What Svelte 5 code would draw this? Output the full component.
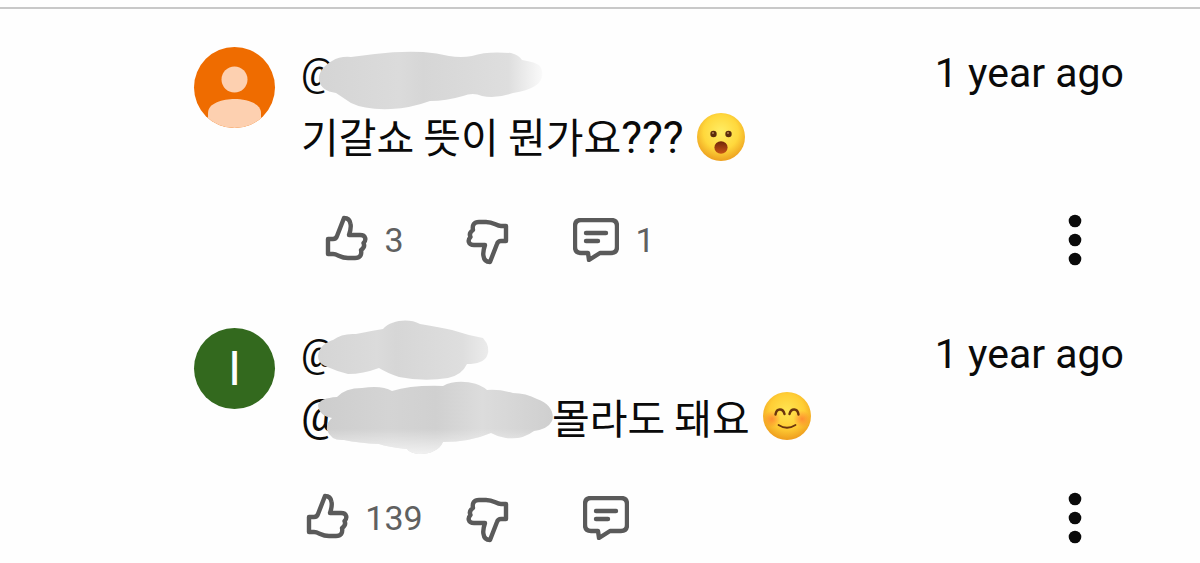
<script>
	let comments = [
		{
			avatar: 'person',
			time: '1 year ago',
			text: '기갈쇼 뜻이 뭔가요',
			marks: '???',
			emoji: 'wow',
			likes: '3',
			replies: '1',
			blot: 'M18 33C17 25 24 18 31 14Q39 9 50 10L74 7Q98 4 122 5Q136 6 148 9Q160 11 171 9C182 5 196 5 210 6Q218 8 221 13Q235 15 239 19C243 26 242 34 234 39Q226 44 212 46Q195 52 181 49Q172 45 162 49Q145 54 129 54Q110 61 90 62Q64 63 50 56Q41 50 35 46Q20 44 18 33Z'
		},
		{
			avatar: 'letter',
			time: '1 year ago',
			mention: true,
			text: '몰라도 돼요',
			emoji: 'smile',
			likes: '139',
			replies: '',
			blot: 'M17 28C18 18 26 14 32 12Q41 5 55 6Q75 2 82 1C90-8 108-10 119-4Q137-1 151 2Q166 7 182 10Q190 19 186 28Q182 36 166 36Q161 47 147 50Q123 54 98 49Q86 45 78 40Q62 46 47 46Q35 43 24 38Q17 35 17 28Z'
		}
	];
</script>

<section class="comments" aria-label="Comments">
	{#each comments as comment, i}
		<article class="comment">
			<a class="avatar {comment.avatar}" href="#channel" aria-label="Channel">
				{#if comment.avatar === 'person'}
					<svg viewBox="0 0 81 81" aria-hidden="true">
						<circle cx="40.5" cy="32.5" r="13" />
						<path d="M14 72V66C14 56 29 52 40.5 52S67 56 67 66V72Q56 81 40.5 81T14 72Z" />
					</svg>
				{:else}
					I
				{/if}
			</a>

			<div class="body">
				<header>
					<a class="handle" href="#channel">
						@
						<svg class="blot" viewBox="0 0 260 80" aria-hidden="true">
							<defs>
								<linearGradient id="fade-{i}" gradientUnits="userSpaceOnUse" x1="0" x2={i ? 190 : 244}>
									<stop offset="0" stop-color="#d3d3d3" />
									<stop offset="0.4" stop-color="#dbdbdb" />
									<stop offset="0.5" stop-color="#d6d6d6" />
									<stop offset="0.85" stop-color="#dedede" />
									<stop offset="1" stop-color={i ? '#ededed' : '#fcfcfc'} />
								</linearGradient>
							</defs>
							<path d={comment.blot} fill="url(#fade-{i})" />
						</svg>
					</a>
					<time>{comment.time}</time>
				</header>

				<p>
					{#if comment.mention}
						<a class="mention latin" href="#mention">
							@
							<svg class="blot" viewBox="0 0 260 80" aria-hidden="true">
								<defs>
									<linearGradient id="mention-fade" x1="0" x2="1">
										<stop offset="0" stop-color="#cdcdcd" />
										<stop offset="0.3" stop-color="#d4d4d4" />
										<stop offset="0.5" stop-color="#d0d0d0" />
										<stop offset="0.7" stop-color="#dcdcdc" />
										<stop offset="1" stop-color="#cfcfcf" />
									</linearGradient>
									<linearGradient id="mention-drip" x1="0" x2="0" y1="0" y2="1">
										<stop offset="0.65" stop-color="#fff" stop-opacity="0" />
										<stop offset="1" stop-color="#fff" stop-opacity="0.7" />
									</linearGradient>
								</defs>
								{#each ['url(#mention-fade)', 'url(#mention-drip)'] as fill}
									<path
										{fill}
										d="M17 18Q19 11 36 10Q44 1 61 1Q81-2 91 4Q110-2 142-1C154-8 176-6 186 3Q198 2 212 6Q225 6 236 12C249 16 254 27 251 34Q247 42 233 44Q221 53 205 51Q197 50 190 46Q169 55 142 55C136 69 112 70 106 62Q87 60 78 57Q58 56 43 53Q30 54 26 43Q25 36 31 31Q18 29 17 18Z"
									/>
								{/each}
							</svg>
						</a>
					{/if}<span>{comment.text}{#if comment.marks}<span class="latin">{comment.marks}</span>{/if}</span>
					{#if comment.emoji === 'wow'}
						<svg class="emoji" viewBox="0 0 48 48" role="img" aria-label="Surprised">
							<defs>
								<radialGradient id="wow-face" cx="0.5" cy="0.4" r="0.6">
									<stop offset="0" stop-color="#ffee66" />
									<stop offset="0.6" stop-color="#ffd83c" />
									<stop offset="1" stop-color="#eda01f" />
								</radialGradient>
								<linearGradient id="wow-mouth" x1="0" x2="0" y1="0" y2="1">
									<stop offset="0" stop-color="#70260a" />
									<stop offset="1" stop-color="#c85415" />
								</linearGradient>
							</defs>
							<circle cx="24" cy="24" r="24" fill="url(#wow-face)" />
							<circle cx="16.5" cy="21" r="3.2" fill="#5a2c0c" />
							<circle cx="31.5" cy="21" r="3.2" fill="#5a2c0c" />
							<circle cx="16" cy="20" r="1" fill="#b58250" />
							<circle cx="31" cy="20" r="1" fill="#b58250" />
							<ellipse cx="24" cy="34.5" rx="6.6" ry="6.2" fill="url(#wow-mouth)" />
						</svg>
					{:else}
						<svg class="emoji" viewBox="0 0 48 48" role="img" aria-label="Smiling">
							<defs>
								<radialGradient id="smile-face" cx="0.5" cy="0.4" r="0.6">
									<stop offset="0" stop-color="#ffe552" />
									<stop offset="0.6" stop-color="#ffce35" />
									<stop offset="1" stop-color="#ee9c1d" />
								</radialGradient>
								<radialGradient id="blush">
									<stop offset="0" stop-color="#ff7330" stop-opacity="0.7" />
									<stop offset="1" stop-color="#ff7330" stop-opacity="0" />
								</radialGradient>
							</defs>
							<circle cx="24" cy="24" r="24" fill="url(#smile-face)" />
							<circle cx="9" cy="27" r="8.5" fill="url(#blush)" />
							<circle cx="39" cy="27" r="8.5" fill="url(#blush)" />
							<g fill="none" stroke="#6b350e" stroke-linecap="round" stroke-width="2.4">
								<path d="M12.5 22.5C13.5 16 20 16 21.5 22" />
								<path d="M26.5 22C28 16 34.5 16 35.5 22.5" />
								<path d="M15.5 33Q24 38.5 32.5 33" stroke-width="1.8" />
							</g>
						</svg>
					{/if}
				</p>

				<div class="actions">
					<button aria-label="Like">
						{@render thumb('')}
						<span class="count">{comment.likes}</span>
					</button>
					<button aria-label="Dislike">{@render thumb('down')}</button>
					<button aria-label="Replies">
						<svg class="icon reply" viewBox="0 0 46 44" aria-hidden="true">
							<path d="M8 2H38Q44 2 44 8V29Q44 35 38 35H27L16 42L15 35H8Q2 35 2 29V8Q2 2 8 2Z" />
							<path d="M13 15H33M13 23H25" />
						</svg>
						<span class="count">{comment.replies}</span>
					</button>
					<button class="more" aria-label="More options">
						<svg viewBox="0 0 14 52" aria-hidden="true">
							<circle cx="7" cy="7" r="6.3" />
							<circle cx="7" cy="26" r="6.3" />
							<circle cx="7" cy="45" r="6.3" />
						</svg>
					</button>
				</div>
			</div>
		</article>
	{/each}
</section>

{#snippet thumb(direction)}
	<svg class="icon thumb {direction}" viewBox="0 0 44 50" aria-hidden="true">
		<path
			d="M4 24V39H9C14 39 16 43 24 43H31C36 43 38 40 37 35C40 33 41 31 39.5 28C42.5 25 42 20 36 20H25C27 14 27 11 26.5 9C26 5 24 3 20 3L13 21Q12 24 9 24Z"
		/>
	</svg>
{/snippet}

<style>
	:global(body) {
		margin: 0;
		background: #fefefe;
	}

	.comments {
		box-sizing: border-box;
		margin-top: 7px;
		border-top: solid 2px #c8c8c8;
		padding: 38px 76px 18px 194px;
		display: grid;
		gap: 62px;
		color: #0a0a0a;
		font-family: Roboto, 'Noto Sans CJK KR', sans-serif;
	}

	.comment {
		display: flex;
		gap: 26px;
	}

	a {
		color: inherit;
		text-decoration: none;
	}

	.avatar {
		flex: none;
		width: 81px;
		height: 81px;
		border-radius: 50%;
		overflow: hidden;
		text-align: center;
		font-size: 48px;
		line-height: 81px;
		color: #fff;
		background: #33691e;
	}

	.avatar.person {
		background: #ef6c00;
	}

	.avatar svg {
		display: block;
		fill: #fdd0b0;
	}

	.body {
		flex: 1;
		min-width: 0;
	}

	header {
		display: flex;
		justify-content: space-between;
		font-size: 41px;
		line-height: 52px;
	}

	.handle,
	.mention {
		position: relative;
	}

	.handle {
		font-size: 38px;
	}

	.blot {
		position: absolute;
		top: 0;
		left: 0;
		width: 260px;
		height: 80px;
		overflow: visible;
	}

	p {
		display: flex;
		align-items: center;
		margin: 7px 0 0;
		font-family: 'Noto Sans CJK KR', sans-serif;
		font-size: 41px;
		line-height: 58px;
	}

	.latin {
		font-family: Roboto, sans-serif;
		font-size: 44px;
	}

	.mention {
		width: 251px;
	}

	.emoji {
		width: 48px;
		height: 48px;
		margin-left: 13px;
	}

	.actions {
		display: grid;
		grid-template-columns: 126px 122px 130px 1fr;
		align-items: center;
		margin-top: 47px;
	}

	button {
		display: flex;
		align-items: center;
		justify-content: center;
		gap: 16px;
		height: 52px;
		border: 0;
		padding: 0;
		background: none;
		color: #606060;
		font-family: inherit;
		font-size: 34px;
		cursor: pointer;
	}

	.icon {
		flex: none;
		fill: none;
		stroke: #5a5a5a;
		stroke-width: 4.4;
		stroke-linecap: round;
		stroke-linejoin: round;
	}

	.thumb {
		width: 44px;
		height: 50px;
	}

	.down {
		transform: rotate(180deg);
	}

	.reply {
		width: 46px;
		height: 44px;
	}

	.more {
		justify-self: end;
		padding-right: 42px;
	}

	.more svg {
		width: 14px;
		height: 52px;
		fill: #0a0a0a;
	}
</style>
